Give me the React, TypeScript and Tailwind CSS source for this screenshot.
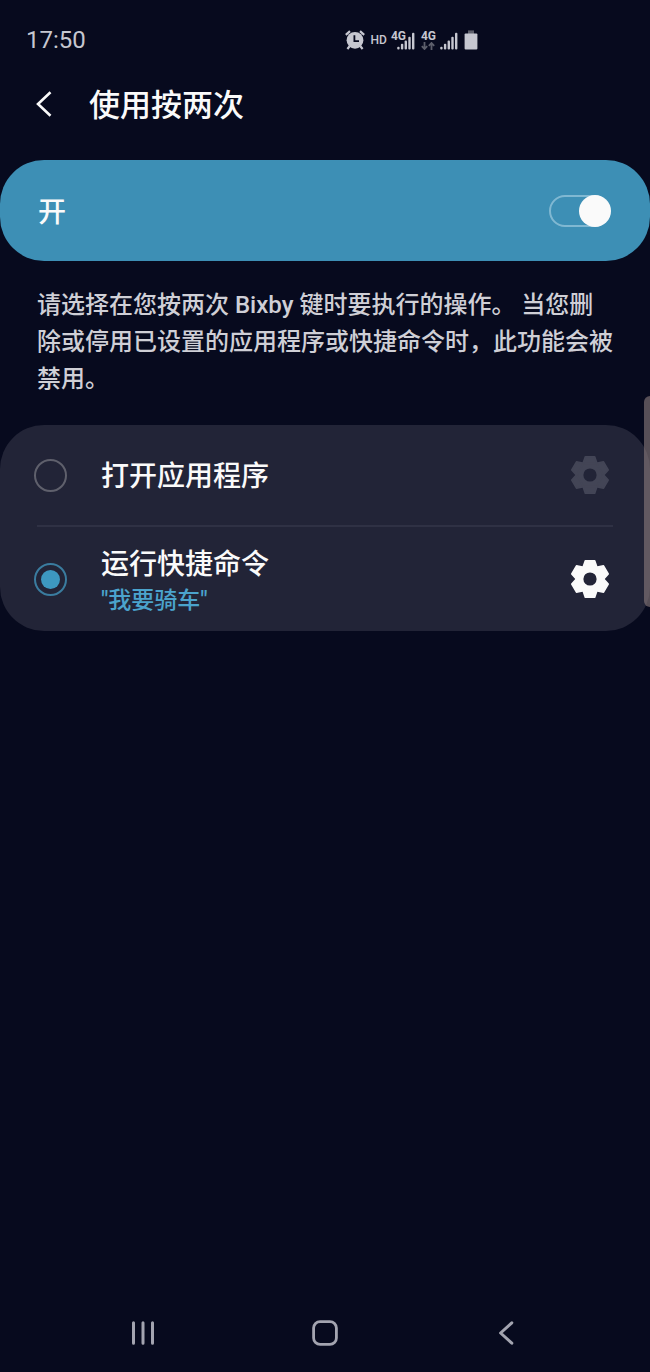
import { useState } from "react";

const options = [
  { id: "app", title: "打开应用程序", detail: "" },
  { id: "command", title: "运行快捷命令", detail: '"我要骑车"' },
];

const teeth = [0, 60, 120, 180, 240, 300];

function AlarmIcon() {
  return (
    <svg viewBox="0 0 20 20" className="h-5 w-5" fill="none" aria-hidden="true">
      <circle cx="10" cy="10.3" r="8.4" fill="currentColor" />
      <path
        d="M.8 4.8 5 1.1M19.2 4.8 15 1.1M4.6 16.2 2.4 19M15.4 16.2l2.2 2.8"
        stroke="currentColor"
        strokeWidth="2.2"
      />
      <path d="M9.4 5.2v6h4.6" stroke="#070a1e" strokeWidth="1.8" />
    </svg>
  );
}

function SignalIcon() {
  return (
    <svg viewBox="0 0 18 18" className="h-[18px] w-[18px]" fill="currentColor" aria-hidden="true">
      <rect x="0.2" y="14.8" width="2.4" height="2.8" rx="1" />
      <rect x="3.9" y="11.8" width="2.4" height="5.8" rx="1" />
      <rect x="7.6" y="8.5" width="2.4" height="9.1" rx="1" />
      <rect x="11.3" y="4.8" width="2.4" height="12.8" rx="1" />
      <rect x="15" y="0.8" width="2.4" height="16.8" rx="1" />
    </svg>
  );
}

function DataArrows() {
  return (
    <svg viewBox="0 0 14 8" className="h-2 w-3.5 text-[#5d5f6b]" fill="none" stroke="currentColor" strokeWidth="1.8" aria-hidden="true">
      <path d="M3.5 0v7M.8 4.2l2.7 2.8 2.7-2.8M10.5 8V1M7.8 3.8 10.5 1l2.7 2.8" />
    </svg>
  );
}

function BatteryIcon() {
  return (
    <svg viewBox="0 0 14 20" className="h-5 w-3.5" aria-hidden="true">
      <rect x="4" y="0.4" width="6" height="3.6" fill="#5d5f6b" />
      <rect x="0.6" y="3.4" width="12.8" height="16" rx="1" fill="currentColor" />
    </svg>
  );
}

function GearIcon() {
  return (
    <svg viewBox="-24 -24 48 48" className="h-12 w-12" aria-hidden="true">
      <g fill="currentColor" stroke="currentColor" strokeWidth="1.6" strokeLinejoin="round">
        <circle r="13.4" />
        {teeth.map((angle) => (
          <path key={angle} d="M-4.7-18.3h9.4L7-11.5H-7z" transform={`rotate(${angle})`} />
        ))}
      </g>
      <circle r="6.6" fill="#222437" />
    </svg>
  );
}

function StatusBar() {
  return (
    <div className="flex h-20 items-center text-[#c6c7d0]">
      <div className="flex-1 pl-[26px] text-2xl">17:50</div>
      <div className="mr-[172px] flex items-center">
        <AlarmIcon />
        <span className="ml-[6px] text-xs leading-5 font-medium">HD</span>
        <div className="relative ml-1 flex h-5 w-6 items-end justify-end">
          <SignalIcon />
          <span className="absolute top-0 left-0 text-xs leading-3 font-bold">4G</span>
        </div>
        <div className="ml-[6px] flex h-5 flex-col justify-between">
          <span className="text-xs leading-3 font-bold">4G</span>
          <DataArrows />
        </div>
        <div className="ml-1 flex h-5 items-end">
          <SignalIcon />
        </div>
        <div className="ml-[6px]">
          <BatteryIcon />
        </div>
      </div>
    </div>
  );
}

function NavBar() {
  return (
    <nav className="mt-auto flex h-[78px] items-center justify-around px-[52px] text-[#a3a4b0]">
      <button aria-label="最近" className="flex h-12 w-12 items-center justify-center">
        <svg viewBox="0 0 24 24" className="h-6 w-6" stroke="currentColor" strokeWidth="3" strokeLinecap="round">
          <path d="M2.5 1.8v20.4M12 1.8v20.4M21.5 1.8v20.4" />
        </svg>
      </button>
      <button aria-label="主页" className="flex h-12 w-12 items-center justify-center">
        <svg viewBox="0 0 26 26" className="h-[26px] w-[26px]" fill="none" stroke="currentColor" strokeWidth="2.8">
          <rect x="1.6" y="1.6" width="22.8" height="22.8" rx="6.5" />
        </svg>
      </button>
      <button aria-label="返回" className="flex h-12 w-12 items-center justify-center">
        <svg viewBox="0 0 24 24" className="h-6 w-6" fill="none" stroke="currentColor" strokeWidth="3" strokeLinecap="round" strokeLinejoin="round">
          <path d="M16.8 1.8 5.6 12l11.2 10.2" />
        </svg>
      </button>
    </nav>
  );
}

export default function App() {
  const [enabled, setEnabled] = useState(true);
  const [selected, setSelected] = useState("command");

  return (
    <div
      lang="zh-CN"
      className="relative flex min-h-screen flex-col bg-[#070a1e] font-[Roboto,'Noto_Sans_CJK_SC',sans-serif] text-[#fafafa]"
    >
      <StatusBar />

      <header className="flex h-12 items-center">
        <button aria-label="返回" className="ml-8 flex h-12 w-6 items-center justify-center">
          <svg viewBox="0 0 24 26" className="h-[26px] w-6" fill="none" stroke="currentColor" strokeWidth="2.6">
            <path d="M18.5 1.2 6 13l12.5 11.8" />
          </svg>
        </button>
        <h1 className="ml-[33px] pt-1 text-[31px] leading-10 font-medium">使用按两次</h1>
      </header>

      <label className="mt-8 flex h-[101px] items-center justify-between rounded-[44px] bg-[#3d8fb5] pr-10 pl-[38px]">
        <span className="pt-1 text-[28px] leading-10 font-medium">开</span>
        <input
          type="checkbox"
          role="switch"
          checked={enabled}
          onChange={(e) => setEnabled(e.target.checked)}
          className="flex h-8 w-[61px] appearance-none items-center rounded-full border-2 border-[#80b8d2] before:-ml-0.5 before:h-8 before:w-8 before:shrink-0 before:rounded-full before:bg-[#fafafa] checked:before:ml-7"
        />
      </label>

      <p className="mt-[26px] px-[37px] text-2xl leading-[37px] font-medium text-[#cfcfd6]">
        请选择在您按两次 Bixby 键时要执行的操作。 当您删除或停用已设置的应用程序或快捷命令时，此功能会被禁用。
      </p>

      <section className="mt-[27px] rounded-[44px] bg-[#222437]">
        {options.map((option, i) => (
          <div key={option.id}>
            {i > 0 && <hr className="mx-[37px] border-t-2 border-[#2f3144]" />}
            <div className={option.detail ? "flex h-[104px] items-center pr-9 pl-[34px]" : "flex h-[100px] items-center pr-9 pl-[34px]"}>
              <label className="flex flex-1 items-center">
                <input
                  type="radio"
                  name="action"
                  checked={selected === option.id}
                  onChange={() => setSelected(option.id)}
                  className="flex h-[33px] w-[33px] appearance-none items-center justify-center rounded-full border-2 border-[#5f606c] checked:border-[#3a7c9f] checked:before:h-[19px] checked:before:w-[19px] checked:before:rounded-full checked:before:bg-[#3d98c0]"
                />
                <span className="ml-[34px] flex flex-col pt-1">
                  <span className="text-[28px] leading-10 font-medium">{option.title}</span>
                  {option.detail && (
                    <span className="text-[23px] leading-8 font-medium text-[#4ba3cc]">{option.detail}</span>
                  )}
                </span>
              </label>
              <button
                aria-label={`${option.title}设置`}
                disabled={selected !== option.id}
                className="text-[#fafafa] disabled:text-[#434556]"
              >
                <GearIcon />
              </button>
            </div>
          </div>
        ))}
      </section>

      {/* edge panel handle */}
      <div className="absolute top-[396px] right-0 h-[211px] w-1.5 rounded-l-md bg-[#8d7d7d]/60" />

      <NavBar />
    </div>
  );
}
